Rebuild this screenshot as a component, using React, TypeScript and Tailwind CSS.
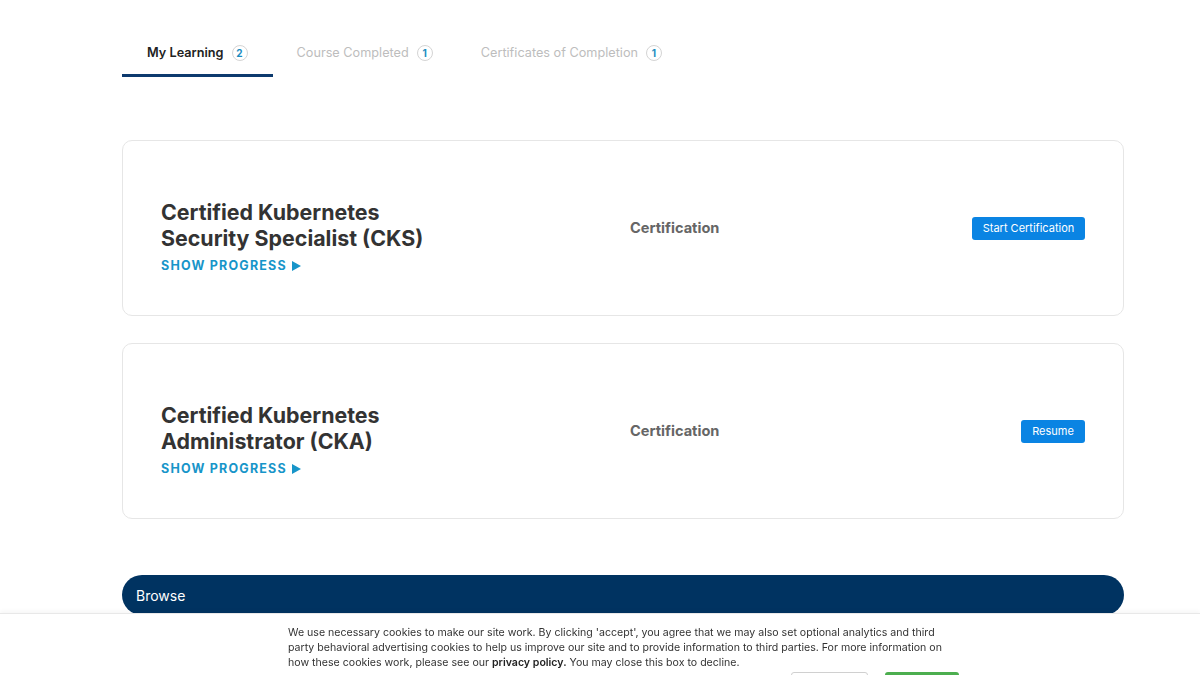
import React from "react";

const font = { fontFamily: "Inter, 'Noto Sans', Arial, sans-serif" };

function Badge({ n }: { n: number }) {
  return (
    <span className="ml-[8px] inline-flex h-[16px] w-[16px] items-center justify-center rounded-full border border-[#d4d4d4] text-[10px] font-bold leading-none text-[#1a8cc0]">
      {n}
    </span>
  );
}

function Tab({ label, n, active }: { label: string; n: number; active?: boolean }) {
  return (
    <div
      className={
        active
          ? "flex items-center px-[25px] pt-[43px] pb-[11px] border-b-[3px] border-[#0d3a6e]"
          : "flex items-center px-[24px] pt-[43px] pb-[11px] border-b-[3px] border-transparent"
      }
    >
      <span
        className={
          active
            ? "h-[20px] text-[12.7px] leading-[20px] font-semibold text-[#222]"
            : "h-[20px] text-[12.7px] leading-[20px] text-[#bdbdbd]"
        }
      >
        {label}
      </span>
      <Badge n={n} />
    </div>
  );
}

function Card({ l1, l2, btn, btnW }: { l1: string; l2: string; btn: string; btnW: string }) {
  return (
    <div className="flex h-[176px] items-center rounded-[10px] border border-[#e6e6e6] bg-white pl-[38px] pr-[38px]">
      <div className="w-[469px] pt-[17px]">
        <div className="text-[21.4px] font-bold leading-[26px] text-[#333]">{l1}</div>
        <div className="text-[21.4px] font-bold leading-[26px] text-[#333]">{l2}</div>
        <div className="mt-[7px] flex items-center text-[12.5px] font-bold leading-[16px] tracking-[1.2px] text-[#1795c9]">
          SHOW PROGRESS
          <svg className="ml-[5px]" width="9" height="10" viewBox="0 0 9 10">
            <path d="M0 0 L9 5 L0 10 Z" fill="#1795c9" />
          </svg>
        </div>
      </div>
      <div className="flex-1 pt-[1px] text-[14.6px] font-bold text-[#666]">Certification</div>
      <button
        className={`h-[23px] ${btnW} rounded-[3px] bg-[#0a84e3] text-[11px] leading-[23px] text-white`}
      >
        {btn}
      </button>
    </div>
  );
}

export default function App() {
  return (
    <div style={font} className="relative h-[675px] w-[1200px] overflow-hidden bg-white">
      <div className="ml-[122px] w-[1002px]">
        <div className="flex">
          <Tab label="My Learning" n={2} active />
          <Tab label="Course Completed" n={1} />
          <Tab label="Certificates of Completion" n={1} />
        </div>
        <div className="mt-[63px] flex flex-col gap-[27px]">
          <Card l1="Certified Kubernetes" l2="Security Specialist (CKS)" btn="Start Certification" btnW="w-[113px]" />
          <Card l1="Certified Kubernetes" l2="Administrator (CKA)" btn="Resume" btnW="w-[64px]" />
        </div>
        <div className="mt-[56px] flex h-[40px] items-center rounded-[20px] bg-[#003361] px-[14px] text-[14px] text-white">
          Browse
        </div>
      </div>
      <div className="fixed bottom-0 left-0 right-0 h-[62px] overflow-hidden border-t border-[#e8e8e8] bg-white shadow-[0_-2px_4px_rgba(0,0,0,0.04)]">
        <div className="ml-[288px] w-[672px] pt-[11px]">
          <p className="w-[664px] text-[10.6px] leading-[15px] text-[#333]">
            We use necessary cookies to make our site work. By clicking 'accept', you agree that we may also set optional analytics and third party behavioral advertising cookies to help us improve our site and to provide information to third parties. For more information on how these cookies work, please see our <b className="font-semibold text-[#222]">privacy policy.</b> You may close this box to decline.
          </p>
          <div className="mt-[2px] flex justify-end gap-[17px] pr-[1px]">
            <div className="h-[28px] w-[77px] rounded-[3px] border border-[#d0d0d0] bg-white" />
            <div className="h-[28px] w-[74px] rounded-[3px] bg-[#4cae4f]" />
          </div>
        </div>
      </div>
    </div>
  );
}
